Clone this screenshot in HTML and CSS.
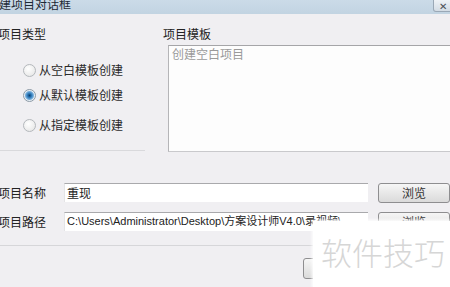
FILE: index.html
```html
<!DOCTYPE html>
<html lang="zh-CN">
<head>
    <meta charset="UTF-8">
    <title>新建项目对话框</title>
    <link rel="stylesheet" href="styles.css">
</head>
<body>

    <!-- Title bar -->
    <div class="titlebar">
        <span class="title">新建项目对话框</span>
        <span class="close">✕</span>
    </div>

    <!-- Dialog content -->
    <div class="main">
        <div class="top">
            <div class="type-group">
                <div class="group-label">项目类型</div>
                <div class="radio-list">
                    <label class="radio"><span class="dot"></span>从空白模板创建</label>
                    <label class="radio checked"><span class="dot"></span>从默认模板创建</label>
                    <label class="radio"><span class="dot"></span>从指定模板创建</label>
                </div>
            </div>
            <div class="template">
                <div class="group-label">项目模板</div>
                <div class="template-box">
                    <div class="template-item">创建空白项目</div>
                </div>
            </div>
        </div>

        <div class="fields">
            <div class="field-row">
                <span class="field-label">项目名称</span>
                <div class="input">重现</div>
                <button class="btn">浏览</button>
            </div>
            <div class="field-row">
                <span class="field-label">项目路径</span>
                <div class="input path">C:\Users\Administrator\Desktop\方案设计师V4.0\录视频\</div>
                <button class="btn">浏览</button>
            </div>
        </div>

        <div class="footer">
            <button class="btn ok">确定</button>
        </div>
    </div>

    <!-- Watermark over the corner -->
    <div class="watermark">软件技巧</div>

</body>
</html>
```

FILE: styles.css
```css
/* General Styles */
body {
    margin: 0;
    width: 450px;
    height: 287px;
    overflow: hidden;
    position: relative;
    background-color: #f0eff2;
    font-family: "Noto Sans CJK SC", "Liberation Sans", sans-serif;
    font-size: 12px;
    color: #222;
}

/* Title bar */
.titlebar {
    height: 14px;
    display: flex;
    justify-content: space-between;
    background: linear-gradient(#cbdbe8, #c2d4e2);
    overflow: hidden;
}

.title {
    margin-left: -13px;
    line-height: 8px;
    color: #1e2a36;
    white-space: nowrap;
}

.close {
    width: 22px;
    height: 12px;
    margin-right: -5px;
    border: 1px solid #9aa8b6;
    border-top: none;
    border-radius: 0 0 0 3px;
    background: linear-gradient(#eef2f6, #d3dce5);
    font-size: 10px;
    line-height: 11px;
    color: #4a4f55;
    padding-left: 5px;
    box-sizing: border-box;
}

/* Top section */
.top {
    display: flex;
    height: 138px;
    padding-top: 12px;
    box-sizing: border-box;
}

.group-label {
    line-height: 16px;
    margin-left: -2px;
}

.type-group {
    width: 145px;
    display: flex;
    flex-direction: column;
    border-bottom: 1px solid #d9d9dc;
    margin-bottom: 1px;
}

.radio-list {
    display: flex;
    flex-direction: column;
    gap: 9px;
    margin-top: 20px;
}

.radio {
    display: flex;
    align-items: center;
    line-height: 16px;
    padding-left: 23px;
    color: #2a2a2a;
    white-space: nowrap;
}

.radio:last-child {
    margin-top: 5px;
}

.dot {
    width: 11px;
    height: 11px;
    border: 1px solid #b4b8bc;
    border-radius: 50%;
    background: radial-gradient(circle at 40% 35%, #ffffff, #e2e2e2);
    margin-right: 3px;
}

.radio.checked .dot {
    background: radial-gradient(circle, #0d3d6b 0, #2b78b8 2px, #78aedb 4px, #e4eef6 5px, #f4f4f4 6px);
    border-color: #8c9aa6;
}

/* Template list */
.template {
    flex: 1;
    display: flex;
    flex-direction: column;
    margin-left: 20px;
    margin-right: -20px;
}

.template-box {
    flex: 1;
    margin-top: 3px;
    margin-left: 3px;
    background-color: #fdfdfd;
    border-top: 1px solid #a5a5a8;
    border-left: 1px solid #b5b5b8;
    border-bottom: 1px solid #c9c9cc;
}

.template-item {
    padding: 1px 3px;
    line-height: 14px;
    color: #9a9a9a;
}

/* Name and path fields */
.fields {
    display: flex;
    flex-direction: column;
    gap: 10px;
    margin-top: 31px;
}

.field-row {
    display: flex;
    align-items: center;
    height: 19px;
}

.field-label {
    width: 67px;
    margin-left: -2px;
    white-space: nowrap;
}

.input {
    width: 308px;
    height: 19px;
    box-sizing: border-box;
    background-color: #ffffff;
    border-top: 1px solid #a9a9ac;
    border-left: 1px solid #e4e4e6;
    padding-left: 2px;
    line-height: 17px;
    white-space: nowrap;
    overflow: hidden;
}

.input.path {
    font-family: "Liberation Sans", "Noto Sans CJK SC", sans-serif;
    font-size: 11px;
}

.btn {
    width: 72px;
    height: 20px;
    margin-left: 10px;
    padding: 0;
    border: 1px solid #8e8e90;
    border-radius: 3px;
    background: linear-gradient(#f6f6f6, #dadada);
    font-family: "Noto Sans CJK SC", sans-serif;
    font-size: 12px;
    color: #333;
    flex-shrink: 0;
}

/* Footer */
.footer {
    margin-top: 14px;
    border-top: 1px solid #d6d6d9;
    padding-top: 12px;
}

.btn.ok {
    margin-left: 303px;
    height: 21px;
    width: 75px;
}

/* Watermark */
.watermark {
    position: absolute;
    left: 313px;
    top: 221px;
    right: 0;
    bottom: 0;
    background-color: #ffffff;
    box-shadow: 0 0 3px 1px #ffffff;
    padding-left: 8px;
    padding-top: 13px;
    font-size: 31px;
    font-weight: 300;
    line-height: 36px;
    color: #d6d6d6;
    white-space: nowrap;
}
```
